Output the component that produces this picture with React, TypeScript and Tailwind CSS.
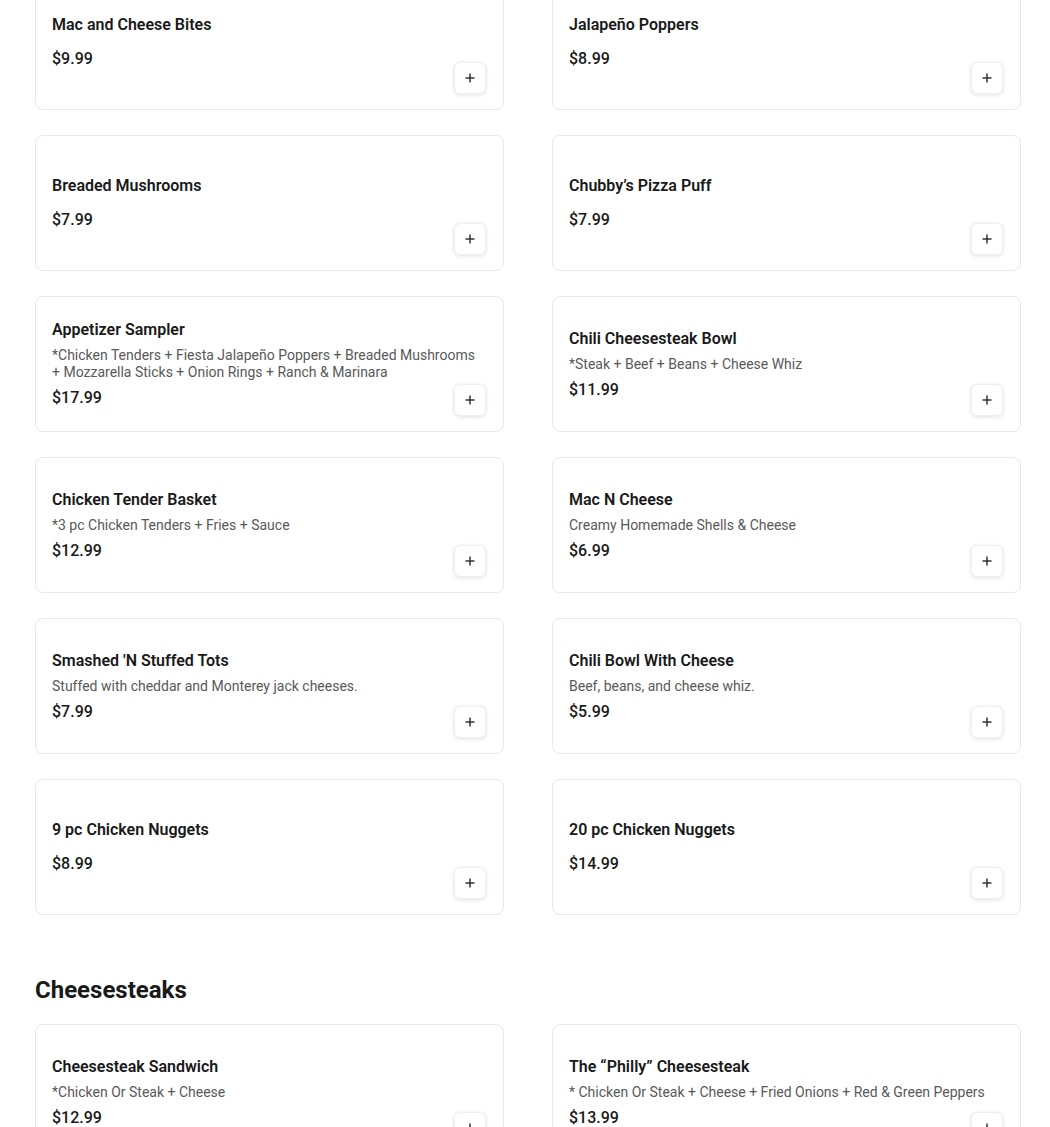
import React from "react";

interface MenuItem {
  name: string;
  price: string;
  description?: string;
}

const appetizers: MenuItem[] = [
  { name: "Mac and Cheese Bites", price: "$9.99" },
  { name: "Jalapeño Poppers", price: "$8.99" },
  { name: "Breaded Mushrooms", price: "$7.99" },
  { name: "Chubby’s Pizza Puff", price: "$7.99" },
  {
    name: "Appetizer Sampler",
    price: "$17.99",
    description:
      "*Chicken Tenders + Fiesta Jalapeño Poppers + Breaded Mushrooms + Mozzarella Sticks + Onion Rings + Ranch & Marinara",
  },
  { name: "Chili Cheesesteak Bowl", price: "$11.99", description: "*Steak + Beef + Beans + Cheese Whiz" },
  { name: "Chicken Tender Basket", price: "$12.99", description: "*3 pc Chicken Tenders + Fries + Sauce" },
  { name: "Mac N Cheese", price: "$6.99", description: "Creamy Homemade Shells & Cheese" },
  { name: "Smashed 'N Stuffed Tots", price: "$7.99", description: "Stuffed with cheddar and Monterey jack cheeses." },
  { name: "Chili Bowl With Cheese", price: "$5.99", description: "Beef, beans, and cheese whiz." },
  { name: "9 pc Chicken Nuggets", price: "$8.99" },
  { name: "20 pc Chicken Nuggets", price: "$14.99" },
];

const cheesesteaks: MenuItem[] = [
  { name: "Cheesesteak Sandwich", price: "$12.99", description: "*Chicken Or Steak + Cheese" },
  {
    name: "The “Philly” Cheesesteak",
    price: "$13.99",
    description: "* Chicken Or Steak + Cheese + Fried Onions + Red & Green Peppers",
  },
];

function PlusButton() {
  return (
    <button className="absolute right-[17px] bottom-[15px] w-8 h-8 flex items-center justify-center rounded-md bg-white border border-[#f0f0f0] shadow-[0_1px_4px_rgba(0,0,0,0.12)]">
      <svg width="12" height="12" viewBox="0 0 12 12" fill="none">
        <path d="M6 1.5v9M1.5 6h9" stroke="#333" strokeWidth="1.5" />
      </svg>
    </button>
  );
}

function ItemCard({ item }: { item: MenuItem }) {
  return (
    <div className="relative h-[136px] flex flex-col justify-center pl-4 pr-6 py-4 rounded-lg border border-[#e8e8e8] bg-white">
      <h3 className="text-base leading-6 font-semibold text-[#191919]">{item.name}</h3>
      {item.description ? (
        <p className="mt-[5px] mb-[5px] text-sm leading-[17px] text-[#595959]">{item.description}</p>
      ) : (
        <div className="h-[10px]" />
      )}
      <p className="text-base leading-6 font-medium text-[#191919]">{item.price}</p>
      <PlusButton />
    </div>
  );
}

export default function App() {
  return (
    <div className="min-h-screen bg-white font-['Roboto',sans-serif] overflow-hidden">
      <div className="ml-[35px] w-[986px] -mt-[26px]">
        <div className="grid grid-cols-2 gap-x-12 gap-y-[25px]">
          {appetizers.map((item) => (
            <ItemCard key={item.name} item={item} />
          ))}
        </div>

        <h2 className="mt-[59px] mb-[18px] text-2xl leading-8 font-bold text-[#191919]">Cheesesteaks</h2>

        <div className="grid grid-cols-2 gap-x-12 gap-y-[25px]">
          {cheesesteaks.map((item) => (
            <ItemCard key={item.name} item={item} />
          ))}
        </div>
      </div>
    </div>
  );
}
